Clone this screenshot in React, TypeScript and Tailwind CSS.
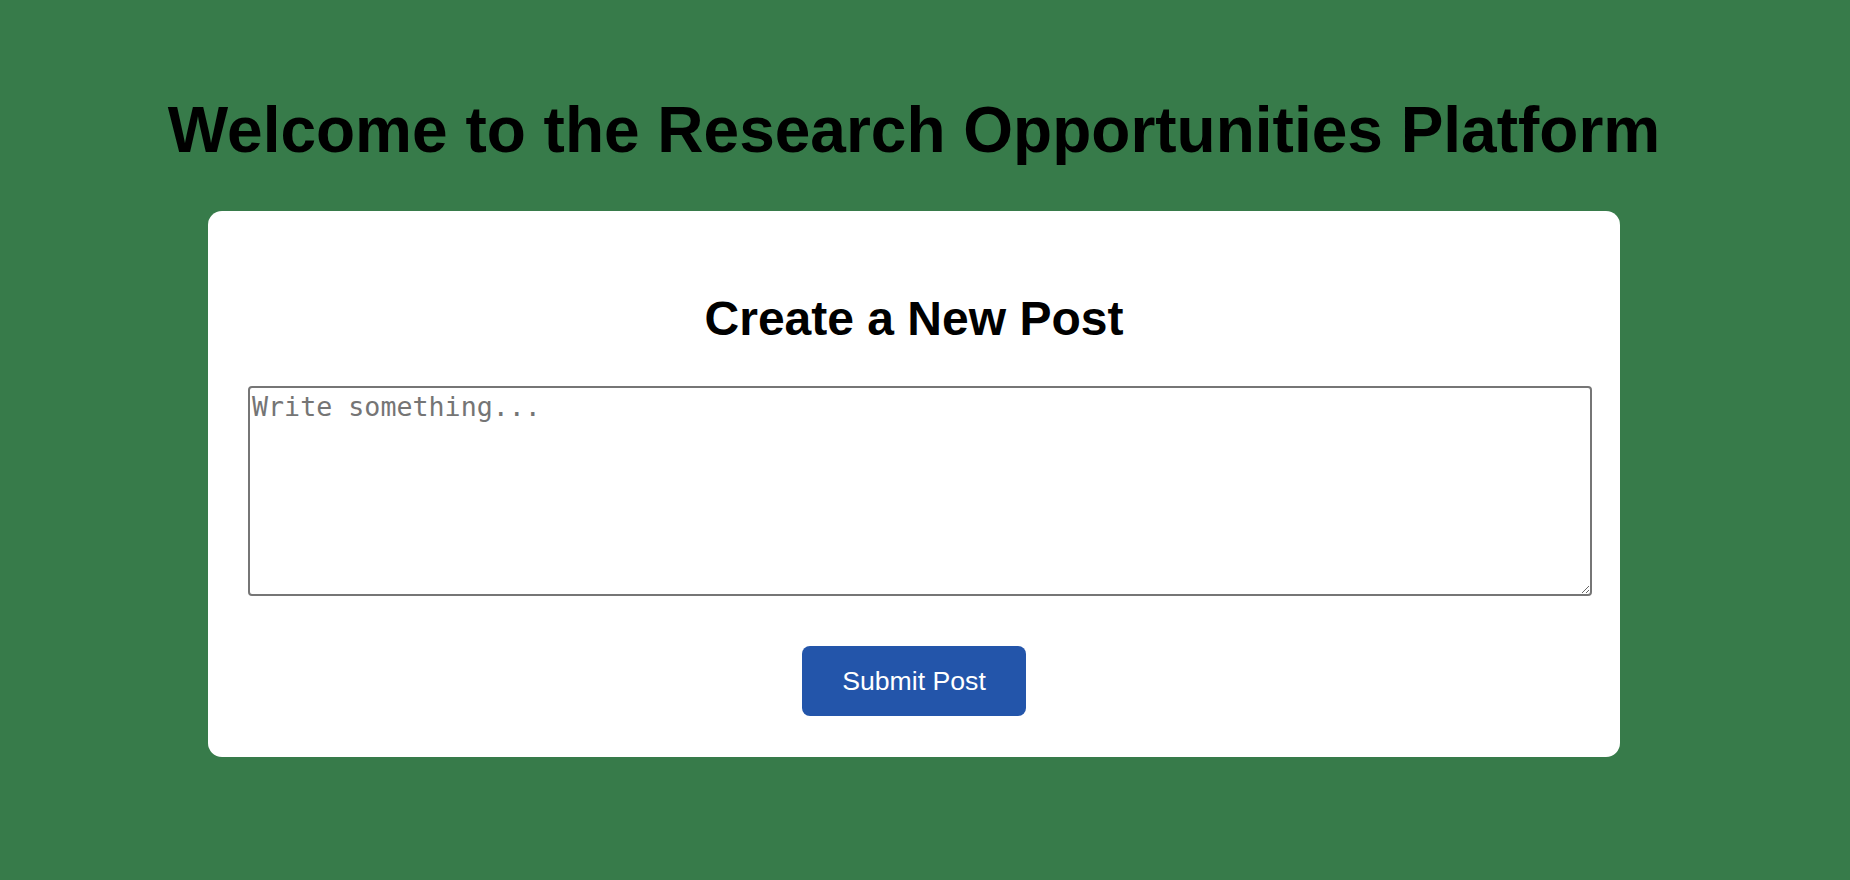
import React from "react";

export default function App() {
  return (
    <div className="min-h-screen w-full bg-[#377b4a] font-['Liberation_Sans',Arial,sans-serif]">
      <div className="w-[1828px] flex flex-col items-center pt-[94px] pb-[40px]">
        <h1 className="text-[64px] leading-[73px] font-bold text-black text-center">
          Welcome to the Research Opportunities Platform
        </h1>
        <div className="mt-[44px] w-[1412px] bg-white rounded-[14px] pt-[40px] px-[40px] pb-[41px] flex flex-col items-center">
          <h2 className="mt-[40px] text-[48px] leading-[55px] font-bold text-black text-center">
            Create a New Post
          </h2>
          <div className="mt-[40px] w-full self-stretch">
            <textarea
              placeholder="Write something..."
              className="block box-content w-full h-[199px] pt-[5px] pb-[2px] pl-[2px] pr-[6px] border-2 border-[#767676] rounded-[4px] bg-white font-['DejaVu_Sans_Mono',monospace] text-[26.67px] leading-[28px] placeholder:text-[#757575] outline-none"
            />
          </div>
          <button className="mt-[50px] bg-[#2355aa] text-white text-[26.67px] leading-[30px] px-[40px] py-[20px] rounded-[8px]">
            Submit Post
          </button>
        </div>
      </div>
    </div>
  );
}
